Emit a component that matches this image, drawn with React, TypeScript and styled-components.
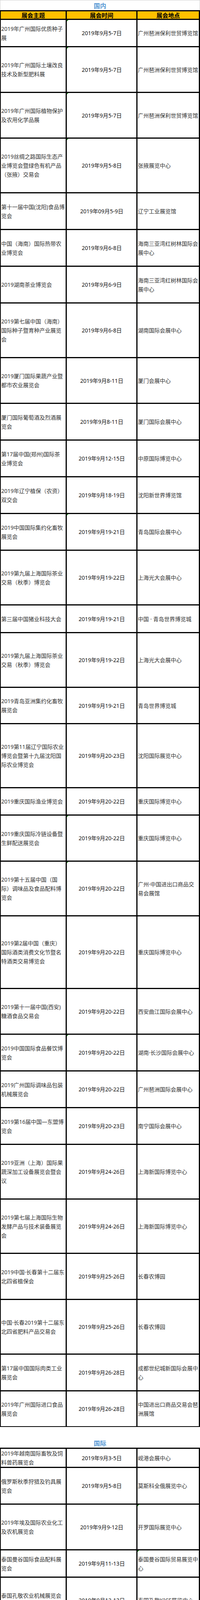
import React from "react";
import styled, { createGlobalStyle, css } from "styled-components";

const GlobalStyle = createGlobalStyle`
  html, body { margin: 0; padding: 0; background: #fff; }
  body {
    font-family: "Noto Sans", "Noto Sans CJK SC", "Liberation Sans", sans-serif;
  }
`;

type Mark = "d" | "v" | undefined;
type Entry = [number, string, string, string, Mark?];

const domestic: Entry[] = [
  [67, "2019年广州国际优质种子\n展", "2019年9月5-7日", "广州琶洲保利世贸博览馆", "d"],
  [114, "2019年广州国际土壤改良\n技术及新型肥料展", "2019年9月5-7日", "广州琶洲保利世贸博览馆", "d"],
  [114, "2019年广州国际植物保护\n及农用化学品展", "2019年9月5-7日", "广州琶洲保利世贸博览馆", "d"],
  [137, "2019丝绸之路国际生态产\n业博览会暨绿色有机产品\n（张掖）交易会", "2019年9月5-8日", "张掖展览中心", "d"],
  [91, "第十一届中国(沈阳)食品博\n览会", "2019年09月5-9日", "辽宁工业展览馆"],
  [91, "中国（海南）国际热带农\n业博览会", "2019年9月6-8日", "海南三亚湾红树林国际会\n展中心"],
  [91, "2019湖南茶业博览会", "2019年9月6-9日", "海南三亚湾红树林国际会\n展中心"],
  [137, "2019第七届中国（海南）\n国际种子暨育种产业展览\n会", "2019年9月6-8日", "湖南国际会展中心"],
  [114, "2019厦门国际果蔬产业暨\n都市农业展览会", "2019年9月8-11日", "厦门会展中心"],
  [91, "厦门国际葡萄酒及烈酒展\n览会", "2019年9月8-11日", "厦门国际会展中心"],
  [91, "第17届中国(郑州)国际茶\n业博览会", "2019年9月12-15日", "中原国际博览中心"],
  [91, "2019年辽宁植保（农资）\n双交会", "2019年9月18-19日", "沈阳新世界博览馆"],
  [91, "2019中国国际集约化畜牧\n展览会", "2019年9月19-21日", "青岛国际会展中心", "d"],
  [137, "2019第九届上海国际茶业\n交易（秋季）博览会", "2019年9月19-22日", "上海光大会展中心"],
  [68, "第三届中国猪业科技大会", "2019年9月19-21日", "中国 · 青岛世界博览城"],
  [137, "2019第九届上海国际茶业\n交易（秋季）博览会", "2019年9月19-22日", "上海光大会展中心"],
  [90, "2019青岛亚洲集约化畜牧\n展览会", "2019年9月19-21日", "青岛世界博览城"],
  [161, "2019第11届辽宁国际农业\n博览会暨第十九届沈阳国\n际农业博览会", "2019年9月20-23日", "沈阳国际展览中心"],
  [67, "2019重庆国际渔业博览会", "2019年9月20-22日", "重庆国际博览中心"],
  [115, "2019重庆国际冷链设备暨\n生鲜配送展览会", "2019年9月20-22日", "重庆国际博览中心", "d"],
  [137, "2019第十五届中国（国\n际）调味品及食品配料博\n览会", "2019年9月20-22日", "广州·中国进出口商品交\n易会展馆", "d"],
  [183, "2019第2届中国（重庆）\n国际酒类消费文化节暨名\n特酒类交易博览会", "2019年9月20-22日", "重庆国际博览中心"],
  [114, "2019第十一届中国(西安)\n糖酒食品交易会", "2019年9月20-22日", "西安曲江国际会展中心"],
  [91, "2019中国国际食品餐饮博\n览会", "2019年9月20-22日", "湖南·长沙国际会展中心", "d"],
  [91, "2019广州国际调味品包装\n机械展览会", "2019年9月20-22日", "广州琶洲国际会展中心"],
  [91, "2019第16届中国—东盟博\n览会", "2019年9月20-23日", "南宁国际会展中心"],
  [137, "2019亚洲（上海）国际果\n蔬深加工设备展览会暨会\n议", "2019年9月24-26日", "上海新国际博览中心"],
  [136, "2019第七届上海国际生物\n发酵产品与技术装备展览\n会", "2019年9月24-26日", "上海新国际博览中心"],
  [115, "2019中国·长春第十二届东\n北四省植保会", "2019年9月25-26日", "长春农博园"],
  [137, "中国·长春2019第十二届东\n北四省肥料产品交易会", "2019年9月25-26日", "长春农博园"],
  [91, "第17届中国国际肉类工业\n展览会", "2019年9月26-28日", "成都世纪城新国际会展中\n心"],
  [89, "2019年广州国际进口食品\n展览会", "2019年9月26-28日", "中国进出口商品交易会琶\n洲展馆"],
];

const international: Entry[] = [
  [46, "2019年越南国际畜牧及饲\n料兽药展览会", "2019年9月3-5日", "岘港会展中心"],
  [91, "俄罗斯秋季狩猎及钓具展\n览会", "2019年9月5-8日", "莫斯科全俄展览中心"],
  [114, "2019年埃及国际农业化工\n及农机展览会", "2019年9月9-12日", "开罗国际展览中心", "v"],
  [67, "泰国曼谷国际食品配料展\n览会", "2019年9月11-13日", "泰国曼谷国际贸易展览中\n心", "v"],
  [114, "泰国孔敬农业机械展览会\nAgriculture Thai", "2019年9月12-13日", "泰国孔敬KICE展览中心"],
  [67, "2019年巴基斯坦国际家禽\n畜牧展览", "2019年9月13-15日", "拉合尔国际会展中心"],
  [69, "俄罗斯圣彼得堡水产品展\n会", "2019年9月13-15日", "俄罗斯 -圣彼得堡"],
  [114, "尼日利亚农业展览会\nAGRIKEXPO", "2019年09月17-20日", "阿布贾国际会议中心"],
  [114, "2019年第十三届哥伦比亚\n国际农业及农化展", "2019年9月18-20日", "哥伦比亚麦德林"],
  [87, "哥伦比亚国际农业及畜\n牧业展", "2019年09月18-20日", "麦德林国际展览中心"],
  [51, "2019年波兰国际农业机械\n展", "2019年09月19-22日", "波兹南"],
  [68, "2019年韩国农业农化展会", "2019年9月25-27日", "大田会议展览中心"],
  [229, "2019第19届越南国际农业\n机械及零部件博览会暨越\n南温室技术及节水灌溉设\n备展览会", "2019年9月26-28日", "越南河内农业展览馆"],
  [114, "缅甸仰光农业展览会AGRI\nMYANMAR", "2019年9月26-28日", "缅甸仰光会展中心"],
  [68, "2019年韩国大邱畜牧业展\n会", "2019年9月26-28日", "大邱国际展会中心"],
  [68, "2019年马来西亚国际农业\n展", "2019年9月26-28日", "吉隆坡实达城会展中心"],
  [67, "中东与非洲海鲜展览会", "2019年9月27-29日", "阿拉伯联合酋长国 -迪拜"],
  [114, "澳大利亚珀斯皇家农业展\n览会ROYAL SHOW", "2019年9月28日-10月5日", "澳大利亚克莱尔蒙特会展\n中心"],
];

const Page = styled.div`
  width: 512px;
  display: flex;
  flex-direction: column;
`;

const SectionTitle = styled.h2<{ $first?: boolean }>`
  margin: 0;
  box-sizing: border-box;
  flex: none;
  text-align: center;
  color: #5b9bd5;
  font-family: "Noto Sans CJK SC", sans-serif;
  font-size: 16px;
  font-weight: 700;
  line-height: 24px;
  ${(p) =>
    p.$first
      ? css`
          height: 26px;
          padding-top: 1px;
          border: 1px solid #d0d0d0;
          border-bottom: none;
        `
      : css`
          height: 53px;
          padding-top: 29px;
        `}
`;

const Table = styled.div<{ $padBottom: number }>`
  flex: none;
  display: flex;
  flex-direction: column;
  gap: 3px;
  background: #000;
  padding: 3px 3px ${(p) => p.$padBottom}px 2px;
`;

const Row = styled.div<{ $h: number }>`
  flex: none;
  display: grid;
  grid-template-columns: 166px 178px 157px;
  grid-template-rows: ${(p) => p.$h}px;
  gap: 3px;
  height: ${(p) => p.$h}px;
`;

const HeaderCell = styled.div`
  background: #ffc000;
  color: #000;
  font-family: "Noto Sans CJK SC", sans-serif;
  font-size: 15px;
  font-weight: 700;
  line-height: 19px;
  display: flex;
  align-items: center;
  justify-content: center;
`;

const Cell = styled.div<{ $center?: boolean; $mark?: boolean; $dark?: boolean }>`
  position: relative;
  min-width: 0;
  min-height: 0;
  background: #fff;
  display: flex;
  align-items: center;
  justify-content: ${(p) => (p.$center ? "center" : "flex-start")};
  padding: 0 0 0 1px;
  font-size: 14px;
  line-height: 23px;
  color: ${(p) => (p.$dark ? "#111" : "#333")};
  white-space: pre;
  ${(p) =>
    p.$mark &&
    css`
      &::before {
        content: "";
        position: absolute;
        top: 0;
        left: 0;
        border-top: 4px solid #0a8a0a;
        border-right: 4px solid transparent;
      }
    `}
`;

const CellText = styled.span<{ $center?: boolean }>`
  text-align: ${(p) => (p.$center ? "center" : "left")};
`;

function Rows({ data }: { data: Entry[] }) {
  return (
    <>
      {data.map(([h, name, date, venue, mark], i) => (
        <Row key={i} $h={h}>
          <Cell>
            <CellText>{name}</CellText>
          </Cell>
          <Cell $center $dark $mark={mark === "d"}>
            <CellText $center>{date}</CellText>
          </Cell>
          <Cell $mark={mark === "v"}>
            <CellText>{venue}</CellText>
          </Cell>
        </Row>
      ))}
    </>
  );
}

export default function App() {
  return (
    <Page>
      <GlobalStyle />
      <SectionTitle $first>国内</SectionTitle>
      <Table $padBottom={2}>
        <Row $h={19}>
          <HeaderCell>展会主题</HeaderCell>
          <HeaderCell>展会时间</HeaderCell>
          <HeaderCell>展会地点</HeaderCell>
        </Row>
        <Rows data={domestic} />
      </Table>
      <SectionTitle>国际</SectionTitle>
      <Table $padBottom={3}>
        <Rows data={international} />
      </Table>
    </Page>
  );
}
